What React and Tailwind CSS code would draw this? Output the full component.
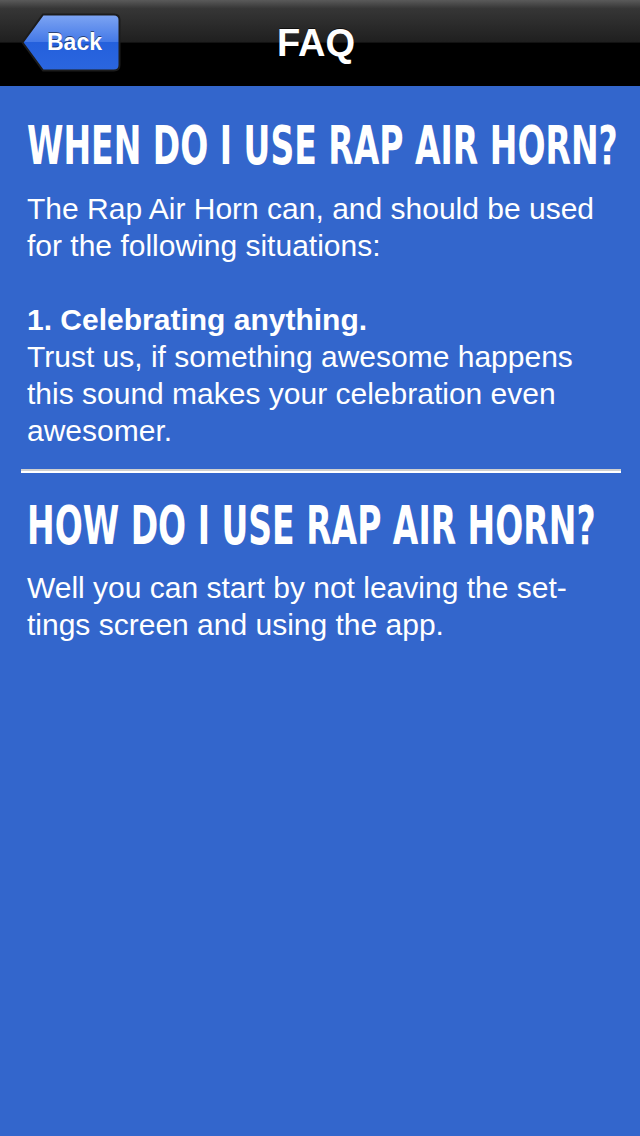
export default function App() {
  return (
    <div className="min-h-[1136px] w-[640px] bg-[#3366cc] font-['Liberation_Sans',Arial,sans-serif] text-white">
      {/* Nav bar */}
      <div className="relative flex h-[86px] items-center justify-center bg-[linear-gradient(to_bottom,#5a5a5a_0%,#363636_10%,#1f1f1f_49%,#000_50%,#000_100%)]">
        <button className="absolute left-[21px] top-[13px] flex h-[59px] w-[100px] items-center">
          <svg width="100" height="59" viewBox="0 0 100 59" className="absolute inset-0">
            <defs>
              <linearGradient id="bk" x1="0" y1="0" x2="0" y2="1">
                <stop offset="0" stopColor="#7ea5f3" />
                <stop offset="0.5" stopColor="#4378e7" />
                <stop offset="0.5" stopColor="#2460dc" />
                <stop offset="1" stopColor="#2b66df" />
              </linearGradient>
            </defs>
            <path d="M1.5 29.5 L22 1.5 H93 Q98.5 1.5 98.5 7 V52 Q98.5 57.5 93 57.5 H22 Z" fill="url(#bk)" stroke="#1c1c1c" strokeWidth="2" />
          </svg>
          <span className="relative ml-[26px] text-[23px] font-bold [text-shadow:0_-1px_0_rgba(0,0,0,0.5)]">Back</span>
        </button>
        <h1 className="mr-[8px] text-[38px] font-bold [text-shadow:0_-1px_0_rgba(0,0,0,0.6)]">FAQ</h1>
      </div>

      {/* Content */}
      <div className="px-[27px] pt-[34px]">
        <h2 className="origin-left scale-x-[0.68] whitespace-nowrap font-['DejaVu_Sans_Condensed',sans-serif] text-[54px] font-bold leading-[52px]">
          WHEN DO I USE RAP AIR HORN?
        </h2>
        <div className="mt-[18px] text-[30px] leading-[37px]">
          <p>The Rap Air Horn can, and should be used for the following situations:</p>
          <p className="mt-[37px] font-bold">1. Celebrating anything.</p>
          <p>Trust us, if something awesome happens this sound makes your celebration even awesomer.</p>
        </div>
      </div>

      <div className="ml-[21px] mr-[19px] mt-[20px] h-[4px] border-t-2 border-[#cfcfcf] bg-white" />

      <div className="px-[27px] pt-[27px]">
        <h2 className="origin-left scale-x-[0.68] whitespace-nowrap font-['DejaVu_Sans_Condensed',sans-serif] text-[54px] font-bold leading-[52px]">
          HOW DO I USE RAP AIR HORN?
        </h2>
        <div className="mt-[17px] text-[30px] leading-[37px]">
          <p>Well you can start by not leaving the set-<br />tings screen and using the app.</p>
        </div>
      </div>
    </div>
  );
}
